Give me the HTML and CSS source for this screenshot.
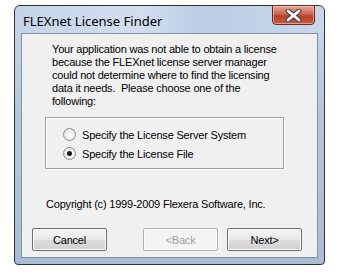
FILE: index.html
```html
<!DOCTYPE html>
<html lang="en">
<head>
    <meta charset="UTF-8">
    <title>FLEXnet License Finder</title>
    <link rel="stylesheet" href="styles.css">
</head>
<body>

    <div class="window">

        <!-- Title Bar -->
        <div class="title-bar">
            <span class="title">FLEXnet License Finder</span>
            <button class="close-button">
                <svg width="17" height="13" viewBox="0 0 17 13">
                    <path d="M3 2 L14 11 M14 2 L3 11" stroke="#4a4a4a" stroke-width="5" stroke-linecap="round"/>
                    <path d="M3 2 L14 11 M14 2 L3 11" stroke="#fff" stroke-width="2.6" stroke-linecap="round"/>
                </svg>
            </button>
        </div>

        <!-- Dialog Body -->
        <div class="panel">
            <p class="message">
                Your application was not able to obtain a license<br>
                because the FLEXnet license server manager<br>
                could not determine where to find the licensing<br>
                data it needs.&nbsp; Please choose one of the<br>
                following:
            </p>

            <div class="group-box">
                <label class="option">
                    <span class="radio"></span>
                    Specify the License Server System
                </label>
                <label class="option">
                    <span class="radio checked"></span>
                    Specify the License File
                </label>
            </div>

            <p class="copyright">Copyright (c) 1999-2009 Flexera Software, Inc.</p>

            <div class="buttons">
                <button class="btn">Cancel</button>
                <div class="nav-buttons">
                    <button class="btn disabled">&lt;Back</button>
                    <button class="btn">Next&gt;</button>
                </div>
            </div>
        </div>

    </div>

</body>
</html>
```

FILE: styles.css
```css
body {
    margin: 0;
    padding: 5px 0 0 14px;
    background-color: #fff;
    font-family: "Liberation Sans", Arial, sans-serif;
}

/* Window Frame */
.window {
    width: 309px;
    height: 258px;
    border: 1px solid #2f3338;
    border-radius: 6px 6px 4px 4px;
    background: linear-gradient(#c9d8ea, #b3c7de 40%, #a9bdd6);
    display: flex;
    flex-direction: column;
}

.title-bar {
    height: 27px;
    display: flex;
    justify-content: space-between;
    align-items: flex-start;
    padding-left: 8px;
    background: linear-gradient(90deg, #c4d4e8, #d2def0 40%, #bccde4 60%, #c8d7ea);
    border-radius: 6px 6px 0 0;
}

.title {
    font-family: "Noto Sans", sans-serif;
    font-size: 13px;
    line-height: 13px;
    margin-top: 9px;
    color: #000;
}

.close-button {
    width: 43px;
    height: 20px;
    margin-right: 9px;
    margin-top: -1px;
    padding: 0;
    border: 1px solid #6a2a20;
    border-radius: 0 0 4px 4px;
    background: linear-gradient(#e8a496, #cf6450 45%, #b9402c 55%, #c75a3e);
    box-shadow: inset 0 0 0 1px rgba(255, 220, 210, 0.5);
    display: flex;
    align-items: center;
    justify-content: center;
}

/* Dialog Body */
.panel {
    flex: 1;
    margin: 0 6px 6px 6px;
    border: 1px solid #8192a8;
    background-color: #f0f0f0;
    padding: 9px 0 0 30px;
    font-size: 11px;
    letter-spacing: -0.2px;
    color: #000;
}

.message {
    margin: 0;
    line-height: 13px;
    white-space: nowrap;
}

.group-box {
    width: 237px;
    margin: 9px 0 0 -7px;
    border: 1px solid #a0a0a0;
    box-shadow: inset 1px 1px 0 #fff, 1px 1px 0 #fff;
    padding-top: 7px;
    height: 43px;
}

.option {
    display: flex;
    align-items: center;
    height: 19px;
    padding-left: 17px;
}

.radio {
    width: 11px;
    height: 11px;
    border: 1px solid #8a8a8a;
    border-radius: 50%;
    background: radial-gradient(circle at 60% 60%, #fff, #dcdcdc);
    margin-right: 6px;
    position: relative;
}

.radio.checked::after {
    content: "";
    position: absolute;
    left: 3px;
    top: 3px;
    width: 5px;
    height: 5px;
    border-radius: 50%;
    background-color: #1a1a1a;
}

.copyright {
    margin: 29px 0 0 -6px;
    line-height: 13px;
}

.buttons {
    display: flex;
    justify-content: space-between;
    margin: 17px 0 0 -20px;
    width: 270px;
}

.nav-buttons {
    display: flex;
    gap: 9px;
}

.btn {
    width: 75px;
    height: 23px;
    padding: 0;
    font-family: "Liberation Sans", Arial, sans-serif;
    font-size: 11px;
    letter-spacing: -0.2px;
    color: #000;
    border: 1px solid #707070;
    border-radius: 2px;
    background: linear-gradient(#f6f6f6, #e8e8e8 50%, #dcdcdc 51%, #d2d2d2);
    box-shadow: inset 0 0 0 1px #fcfcfc;
}

.btn.disabled {
    color: #a0a0a0;
    border-color: #adb2b5;
    background: #f4f4f4;
}
```
